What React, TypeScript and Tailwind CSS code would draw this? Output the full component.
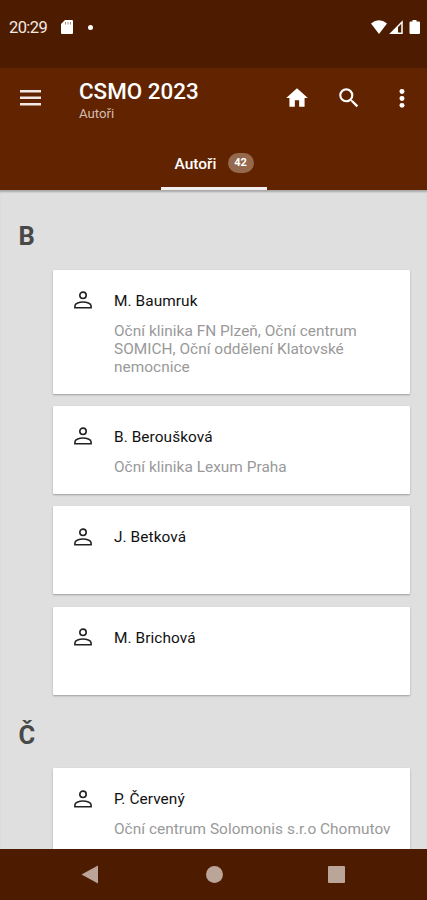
import React from "react";

type Author = { name: string; place?: string; height: string };

const groups: { letter: string; authors: Author[] }[] = [
  {
    letter: "B",
    authors: [
      {
        name: "M. Baumruk",
        place: "Oční klinika FN Plzeň, Oční centrum SOMICH, Oční oddělení Klatovské nemocnice",
        height: "h-[124px]",
      },
      { name: "B. Beroušková", place: "Oční klinika Lexum Praha", height: "h-[88px]" },
      { name: "J. Betková", height: "h-[88px]" },
      { name: "M. Brichová", height: "h-[88px]" },
    ],
  },
  {
    letter: "Č",
    authors: [
      { name: "P. Červený", place: "Oční centrum Solomonis s.r.o Chomutov", height: "h-[88px]" },
    ],
  },
];

function StatusBar() {
  return (
    <div className="flex h-[68px] shrink-0 items-start bg-[#4d1c00] pt-[18px] pl-[9px] pr-[7px] text-white">
      <span className="w-[52px] text-[16.5px] leading-[20px] tracking-[-0.6px] text-[#f3e9e4]">20:29</span>
      <svg className="mt-[2px] h-[14px] w-[12px]" viewBox="0 0 12 14" fill="currentColor">
        <path d="M4 0h7q1 0 1 1v12q0 1-1 1H1q-1 0-1-1V4z" />
        <path d="M4.500 2v2.500M7 2v2.500M9.500 2v2.500" stroke="#4d1c00" strokeOpacity="0.5" />
      </svg>
      <span className="mt-[6.500px] ml-[15px] h-[5px] w-[5px] rounded-full bg-white" />
      <svg className="mt-[2px] ml-auto h-[14px] w-[49px]" viewBox="0 0 49 14" fill="currentColor">
        <path d="M0 3.500Q8-3 16 3.500L8 14z" />
        <path d="M31 2v11.200H20z" fill="none" stroke="currentColor" strokeWidth="1.500" />
        <path d="M27 6V13h-7z" />
        <path d="M41.500 0h4v1.500H48q1 0 1 1V13q0 1-1 1h-8.500q-1 0-1-1V2.500q0-1 1-1h2z" />
      </svg>
    </div>
  );
}

function Toolbar() {
  return (
    <header className="flex h-[121.500px] shrink-0 flex-col bg-[#622300] text-white">
      <div className="flex h-[61px] items-start pl-[20px] pr-[12px]">
        <svg className="mt-[22px] h-[16px] w-[21px]" viewBox="0 0 21 16" fill="#f3e9e4">
          <path d="M0 0h21v2.500H0zM0 6.500h21V9H0zM0 13h21v2.500H0z" />
        </svg>
        <div className="mt-[10px] ml-[38px] flex-1">
          <h1 className="text-[22.400px] leading-[26px] font-medium">CSMO 2023</h1>
          <p className="mt-px text-[13.200px] leading-[18px] text-[#d3bdb2]">Autoři</p>
        </div>
        <svg className="mt-[17px] h-[26px] w-[26px]" viewBox="0 0 24 24" fill="currentColor">
          <path d="M10 20v-6h4v6h5v-8h3L12 3 2 12h3v8z" />
        </svg>
        <svg className="mt-[17px] ml-[26px] h-[26px] w-[26px]" viewBox="0 0 24 24" fill="currentColor">
          <path d="M15.500 14h-.79l-.28-.27A6.470 6.470 0 0 0 16 9.500 6.500 6.500 0 1 0 9.500 16c1.610 0 3.090-.59 4.230-1.570l.27.28v.79l5 4.990L20.490 19l-4.990-5zm-6 0C7.010 14 5 11.990 5 9.500S7.010 5 9.500 5 14 7.010 14 9.500 11.990 14 9.500 14z" />
        </svg>
        <svg className="mt-[17px] ml-[27px] h-[26px] w-[26px]" viewBox="0 0 24 24" fill="currentColor">
          <circle cx="12" cy="6" r="2.300" />
          <circle cx="12" cy="12.400" r="2.300" />
          <circle cx="12" cy="18.800" r="2.300" />
        </svg>
      </div>
      <nav className="flex h-[60.500px] justify-center">
        <div className="flex w-[106px] items-center justify-center gap-[11px] border-b-[3px] border-[#f3eeee] pt-[13px] pl-px">
          <span className="text-[15.500px] font-medium">Autoři</span>
          <span className="mb-[2px] flex h-[20px] w-[26px] items-center justify-center rounded-full bg-[#95694d] text-[11px] font-bold">
            42
          </span>
        </div>
      </nav>
    </header>
  );
}

function PersonIcon() {
  return (
    <svg
      className="mt-[21.500px] h-[18px] w-[18px] shrink-0"
      viewBox="0 0 18 18"
      fill="none"
      stroke="#222"
      strokeWidth="1.600"
    >
      <circle cx="9" cy="4.300" r="3.200" />
      <path d="M.9 16.700v-1.800C.9 12.300 5.500 11 9 11s8.100 1.300 8.100 3.900v1.800z" />
    </svg>
  );
}

function AuthorCard({ name, place, height }: Author) {
  return (
    <li className={`flex shrink-0 rounded-[1px] bg-white pl-[21px] shadow-[0_1px_2px_rgba(0,0,0,0.3)] ${height}`}>
      <PersonIcon />
      <div className="mt-[21px] ml-[22px] w-[280px]">
        <p className="text-[15.400px] leading-[20px] tracking-[0.08px] text-[#111]">{name}</p>
        {place && (
          <p className="mt-[11px] text-[15.400px] leading-[18px] tracking-[0.03px] text-[#999]">{place}</p>
        )}
      </div>
    </li>
  );
}

function NavigationBar() {
  return (
    <div className="flex h-[51px] shrink-0 items-center bg-[#4d1c00] pl-[81px] text-[#bba498]">
      <svg className="h-[19px] w-[17px]" viewBox="0 0 17 19" fill="currentColor">
        <path d="M17 .5v18L.5 9.500z" />
      </svg>
      <span className="ml-[107.500px] h-[17px] w-[17px] rounded-full bg-current" />
      <span className="ml-[105.500px] h-[17px] w-[17px] rounded-[1px] bg-current" />
    </div>
  );
}

function App() {
  return (
    <div className="flex h-[900px] w-[427px] flex-col overflow-hidden bg-[#dfdfdf] font-['Roboto',sans-serif]">
      <StatusBar />
      <Toolbar />
      <main className="min-h-0 flex-1 overflow-hidden pt-[6.500px] shadow-[inset_0_3px_2px_-1px_rgba(0,0,0,0.25)]">
        {groups.map((group) => (
          <section key={group.letter}>
            <h2 className="h-[73.500px] pt-[25px] pl-[18.500px] text-[25.500px] leading-[30px] font-bold text-[#484848]">
              {group.letter}
            </h2>
            <ul className="mr-[17px] ml-[53px] flex flex-col gap-[12.400px]">
              {group.authors.map((author) => (
                <AuthorCard key={author.name} {...author} />
              ))}
            </ul>
          </section>
        ))}
      </main>
      <NavigationBar />
    </div>
  );
}

export default App;
